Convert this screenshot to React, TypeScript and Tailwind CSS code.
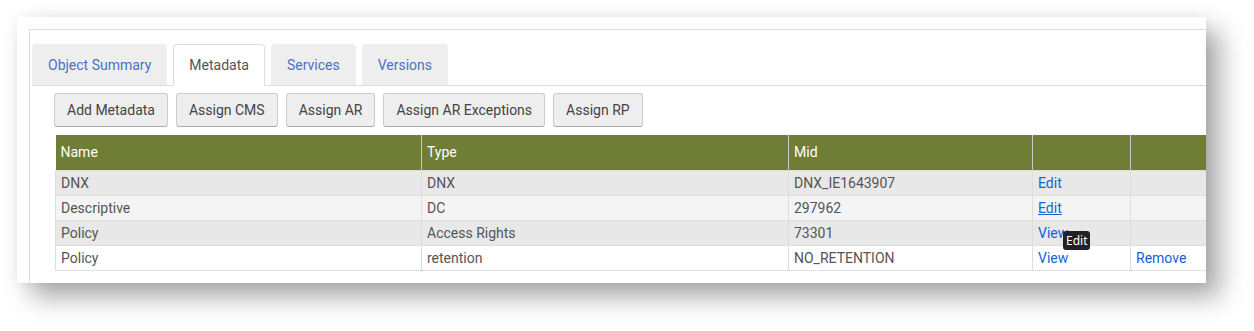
const tabs = [
  { label: "Object Summary", active: false },
  { label: "Metadata", active: true },
  { label: "Services", active: false },
  { label: "Versions", active: false },
];

const actions = ["Add Metadata", "Assign CMS", "Assign AR", "Assign AR Exceptions", "Assign RP"];

type Row = { name: string; type: string; mid: string; link: string; remove?: boolean; hover?: boolean; bg: string };

const rows: Row[] = [
  { name: "DNX", type: "DNX", mid: "DNX_IE1643907", link: "Edit", bg: "bg-[#e8e8e8]" },
  { name: "Descriptive", type: "DC", mid: "297962", link: "Edit", hover: true, bg: "bg-[#f4f4f4]" },
  { name: "Policy", type: "Access Rights", mid: "73301", link: "View", bg: "bg-[#e8e8e8]" },
  { name: "Policy", type: "retention", mid: "NO_RETENTION", link: "View", remove: true, bg: "bg-white" },
];

export default function App() {
  return (
    <div className="h-[331px] w-[1254px] bg-white p-[17px] font-['Roboto',sans-serif] text-sm">
      <div className="relative h-[266px] w-[1189px] overflow-hidden bg-white shadow-[14px_14px_24px_rgba(0,0,0,0.34),0_0_12px_rgba(0,0,0,0.06)]">
        <div className="ml-3 mt-3 h-full border-l border-t border-[#ddd] pl-[2px] pt-[14px]">
          <div className="flex items-start gap-[6px] border-b border-[#ddd]">
            {tabs.map((t) =>
              t.active ? (
                <div
                  key={t.label}
                  className="-mb-px flex h-[42px] items-center rounded-t-[4px] border border-b-0 border-[#ddd] bg-white px-[15px] pb-px text-[#555]"
                >
                  {t.label}
                </div>
              ) : (
                <div
                  key={t.label}
                  className="flex h-[41px] items-center rounded-t-[4px] bg-[#eee] px-[16px] text-[#4a72c4]"
                >
                  {t.label}
                </div>
              )
            )}
          </div>

          <div className="ml-[22px] mt-[7px] flex gap-[8px]">
            {actions.map((a) => (
              <button
                key={a}
                className="h-[34px] rounded-[3px] border border-[#ccc] border-b-[#aaa] bg-[#eee] px-[12px] text-[#444]"
              >
                {a}
              </button>
            ))}
          </div>

          <table className="ml-[23px] mt-2 w-[1175px] max-w-none table-fixed border-collapse text-[#555]">
            <colgroup>
              <col className="w-[366px]" />
              <col className="w-[367px]" />
              <col className="w-[244px]" />
              <col className="w-[98px]" />
              <col className="w-[100px]" />
            </colgroup>
            <thead>
              <tr className="h-[35px] bg-[#6f7d36] text-left text-white">
                <th className="border-r border-[#c8c8c8] px-[5px] font-normal">Name</th>
                <th className="border-r border-[#c8c8c8] px-[5px] font-normal">Type</th>
                <th className="border-r border-[#c8c8c8] px-[5px] font-normal">Mid</th>
                <th className="border-r border-[#c8c8c8] px-[5px] font-normal"></th>
                <th className="px-[5px] font-normal"></th>
              </tr>
            </thead>
            <tbody>
              {rows.map((r, i) => (
                <tr
                  key={i}
                  className={`h-[25px] ${r.bg} ${i === rows.length - 1 ? "border-b border-dotted border-[#ccc]" : "border-b border-[#ddd]"} border-t border-t-[#ddd]`}
                >
                  <td className="border-l border-[#ddd] px-[5px] py-0">{r.name}</td>
                  <td className="border-l border-[#ddd] px-[5px] py-0">{r.type}</td>
                  <td className="border-l border-[#ddd] px-[5px] py-0">{r.mid}</td>
                  <td className="relative border-l border-[#ddd] px-[5px] py-0">
                    <a className={`text-[#1563d0] ${r.hover ? "underline" : ""}`}>{r.link}</a>
                    {i === 2 && (
                      <span className="absolute left-[30px] top-[10px] z-10 rounded-[3px] bg-[#222226] px-[3px] py-[1px] font-['Noto_Sans',sans-serif] text-[12px] leading-[17px] text-white">
                        Edit
                      </span>
                    )}
                  </td>
                  <td className="border-l border-[#ddd] px-[5px] py-0">
                    {r.remove && <a className="text-[#1563d0]">Remove</a>}
                  </td>
                </tr>
              ))}
            </tbody>
          </table>
        </div>
      </div>
    </div>
  );
}
